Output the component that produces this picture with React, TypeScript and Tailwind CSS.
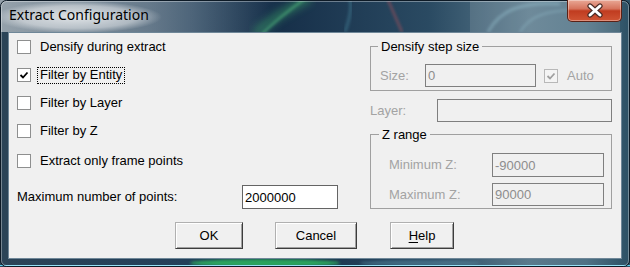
import React from "react";

function Check({ checked, disabled }: { checked?: boolean; disabled?: boolean }) {
  return (
    <span
      className={
        disabled
          ? "flex h-[14px] w-[14px] shrink-0 items-center justify-center border border-[#b8b8b8] bg-[#f4f4f4]"
          : "flex h-[14px] w-[14px] shrink-0 items-center justify-center border border-[#8e8f8f] bg-white"
      }
    >
      {checked && (
        <svg width="10" height="10" viewBox="0 0 10 10">
          <path
            d="M1.5 5 L4 7.5 L8.5 2.5"
            fill="none"
            stroke={disabled ? "#a0a0a0" : "#000"}
            strokeWidth="1.8"
          />
        </svg>
      )}
    </span>
  );
}

function Glass() {
  return (
    <svg className="absolute inset-0" width="630" height="267" viewBox="0 0 630 267">
      <defs>
        <linearGradient id="base" x1="0" y1="0" x2="1" y2="0">
          <stop offset="0" stopColor="#2b4457" />
          <stop offset="0.3" stopColor="#23405a" />
          <stop offset="0.45" stopColor="#17304a" />
          <stop offset="0.68" stopColor="#2a4a62" />
          <stop offset="0.84" stopColor="#5a7a8c" />
          <stop offset="0.93" stopColor="#4f7285" />
          <stop offset="1" stopColor="#2c5064" />
        </linearGradient>
        <linearGradient id="sheen" x1="0" y1="0" x2="1" y2="0">
          <stop offset="0" stopColor="#ffffff" stopOpacity="0.5" />
          <stop offset="0.55" stopColor="#ffffff" stopOpacity="0.3" />
          <stop offset="1" stopColor="#ffffff" stopOpacity="0" />
        </linearGradient>
        <radialGradient id="glow" cx="0.5" cy="0.5" r="0.5">
          <stop offset="0" stopColor="#ffffff" stopOpacity="0.75" />
          <stop offset="0.7" stopColor="#ffffff" stopOpacity="0.45" />
          <stop offset="1" stopColor="#ffffff" stopOpacity="0" />
        </radialGradient>
        <filter id="blur4">
          <feGaussianBlur stdDeviation="4" />
        </filter>
        <filter id="blur2">
          <feGaussianBlur stdDeviation="1.5" />
        </filter>
      </defs>
      <rect width="630" height="267" fill="url(#base)" />
      <rect x="0" y="0" width="270" height="32" fill="url(#sheen)" />
      <rect x="470" y="0" width="150" height="32" fill="#ffffff" opacity="0.12" />
      <ellipse cx="78" cy="17" rx="84" ry="16" fill="url(#glow)" />
      <path d="M255 34 C270 20 290 8 310 -2" stroke="#3fb36c" strokeWidth="7" fill="none" opacity="0.55" filter="url(#blur4)" />
      <path d="M262 34 C276 20 292 8 306 -2" stroke="#5fd08a" strokeWidth="2" fill="none" opacity="0.6" filter="url(#blur2)" />
      <path d="M388 0 L402 32" stroke="#c4545a" strokeWidth="2" fill="none" opacity="0.55" filter="url(#blur2)" />
      <path d="M345 32 C350 18 352 8 350 0" stroke="#4a8aa0" strokeWidth="3" fill="none" opacity="0.45" filter="url(#blur2)" />
      <path d="M488 32 C500 10 520 2 560 4" stroke="#9cc8d6" strokeWidth="3" fill="none" opacity="0.4" filter="url(#blur2)" />
      <path d="M520 32 C530 16 545 10 580 10" stroke="#9cc8d6" strokeWidth="2" fill="none" opacity="0.35" filter="url(#blur2)" />
      <ellipse cx="265" cy="263" rx="75" ry="4" fill="#2fbf62" opacity="0.8" filter="url(#blur2)" />
      <ellipse cx="420" cy="263" rx="60" ry="3" fill="#5b8fa4" opacity="0.5" filter="url(#blur2)" />
      <line x1="0" y1="265.5" x2="630" y2="265.5" stroke="#5cd3f2" strokeWidth="1" />
      <rect x="0.5" y="0.5" width="629" height="266" rx="6" fill="none" stroke="#0d1a26" />
      <rect x="1.5" y="1.5" width="627" height="264" rx="5" fill="none" stroke="#ffffff" strokeOpacity="0.35" />
    </svg>
  );
}

function CloseButton() {
  return (
    <div className="mr-[8px] flex h-[22px] w-[55px] items-center justify-center rounded-b-[5px] border border-t-0 border-[#5a2116] bg-[linear-gradient(180deg,#e9a896_0%,#d6735c_42%,#c03c20_52%,#cf5434_100%)] shadow-[inset_0_0_0_1px_rgba(255,255,255,0.35)]">
      <svg width="18" height="15" viewBox="0 0 18 15">
        <path d="M4 3 L14 12 M14 3 L4 12" stroke="#4a2a24" strokeWidth="5.2" strokeLinecap="round" />
        <path d="M4 3 L14 12 M14 3 L4 12" stroke="#ffffff" strokeWidth="3" strokeLinecap="round" />
      </svg>
    </div>
  );
}

function Button({ children, width, className }: { children: React.ReactNode; width: string; className?: string }) {
  return (
    <button
      type="button"
      className={`${width} ${className ?? ""} flex h-[27px] items-center justify-center border border-t-[#b0b0b0] border-l-[#b0b0b0] border-r-[#3c3c3c] border-b-[#3c3c3c] bg-[#f0f0f0] text-[13px] text-black shadow-[inset_1px_1px_0_#ffffff,inset_-1px_-1px_0_#a0a0a0]`}
    >
      {children}
    </button>
  );
}

const inputOn = "h-[24px] min-w-0 border border-[#646464] bg-white px-[2px] text-[13px] text-black outline-none";
const inputOff = "min-w-0 border border-[#7f7f7f] bg-[#f0f0f0] px-[2px] text-[13px] text-[#8d8d8d] outline-none";

export default function App() {
  return (
    <div className="relative h-[267px] w-[630px] overflow-hidden font-['Liberation_Sans',Arial,sans-serif] text-[13px] text-black">
      <Glass />
      <div className="relative flex h-full flex-col">
        <div className="flex h-[32px] items-start justify-between">
          <div className="ml-[9px] mt-[6px] font-['Noto_Sans',sans-serif] text-[14px] leading-[18px] text-black">
            Extract Configuration
          </div>
          <CloseButton />
        </div>

        <div className="mx-[8px] h-[227px] border border-[#6f8798] bg-[#f0f0f0]">
          <div className="flex h-[181px]">
            {/* left column */}
            <div className="flex w-[361px] shrink-0 flex-col pl-[8px]">
              <div className="flex h-[28px] items-center">
                <Check />
                <span className="ml-[9px]">Densify during extract</span>
              </div>
              <div className="flex h-[28px] items-center">
                <Check checked />
                <span className="ml-[6px] flex h-[17px] items-center border border-dotted border-black px-[2px]">
                  Filter by Entity
                </span>
              </div>
              <div className="flex h-[28px] items-center">
                <Check />
                <span className="ml-[9px]">Filter by Layer</span>
              </div>
              <div className="flex h-[28px] items-center">
                <Check />
                <span className="ml-[9px]">Filter by Z</span>
              </div>
              <div className="mt-[2px] flex h-[28px] items-center">
                <Check />
                <span className="ml-[9px]">Extract only frame points</span>
              </div>
              <div className="mt-[10px] flex h-[24px] items-center">
                <span className="w-[225px] shrink-0">Maximum number of points:</span>
                <input className={`w-[96px] shrink-0 ${inputOn}`} defaultValue="2000000" />
              </div>
            </div>

            {/* right column */}
            <div className="flex w-[242px] shrink-0 flex-col pt-[6px]">
              <fieldset className="border border-[#a0a0a0] p-0">
                <legend className="ml-[7px] px-[3px] leading-[15px]">Densify step size</legend>
                <div className="flex items-center pb-[3px] pl-[9px] pt-[10px]">
                  <span className="w-[45px] shrink-0 text-[#a3a3a3]">Size:</span>
                  <input className={`h-[23px] w-[111px] shrink-0 ${inputOff}`} readOnly value="0" />
                  <span className="ml-[8px]">
                    <Check checked disabled />
                  </span>
                  <span className="ml-[9px] text-[#a3a3a3]">Auto</span>
                </div>
              </fieldset>

              <div className="mt-[8px] flex h-[23px] items-center">
                <span className="w-[67px] shrink-0 text-[#a3a3a3]">Layer:</span>
                <input className={`h-[23px] flex-1 ${inputOff}`} readOnly value="" />
              </div>

              <fieldset className="mt-[5px] border border-[#a0a0a0] p-0">
                <legend className="ml-[8px] px-[3px] leading-[15px]">Z range</legend>
                <div className="flex flex-col pb-[2px] pl-[18px] pt-[11px]">
                  <div className="flex items-center">
                    <span className="w-[103px] shrink-0 text-[#a3a3a3]">Minimum Z:</span>
                    <input className={`h-[24px] w-[112px] shrink-0 ${inputOff}`} readOnly value="-90000" />
                  </div>
                  <div className="mt-[6px] flex items-center">
                    <span className="w-[103px] shrink-0 text-[#a3a3a3]">Maximum Z:</span>
                    <input className={`h-[23px] w-[112px] shrink-0 ${inputOff}`} readOnly value="90000" />
                  </div>
                </div>
              </fieldset>
            </div>
          </div>

          <div className="mt-[8px] flex pl-[166px]">
            <Button width="w-[68px]">OK</Button>
            <Button width="w-[82px]" className="ml-[32px]">
              Cancel
            </Button>
            <Button width="w-[64px]" className="ml-[33px]">
              <span className="underline underline-offset-2">H</span>elp
            </Button>
          </div>
        </div>
      </div>
    </div>
  );
}
